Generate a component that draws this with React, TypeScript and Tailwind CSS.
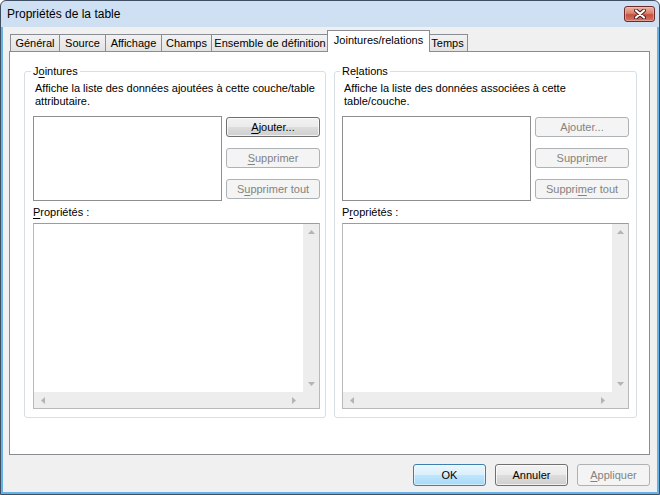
import React from "react";

// Boîte de dialogue « Propriétés de la table », onglet Jointures/relations (style Windows 7).

const TABS = [
  { label: "Général", w: "w-[50px]" },
  { label: "Source", w: "w-[47px]" },
  { label: "Affichage", w: "w-[57px]" },
  { label: "Champs", w: "w-[51px]" },
  { label: "Ensemble de définition", w: "w-[118px]" },
  { label: "Jointures/relations", w: "w-[103px]", active: true },
  { label: "Temps", w: "w-[41px]" },
];

// libellé avec lettre soulignée (raccourci clavier)
function Mn({ text, at }: { text: string; at: number }) {
  return (
    <>
      {text.slice(0, at)}
      <span className="underline underline-offset-[2px]">{text[at]}</span>
      {text.slice(at + 1)}
    </>
  );
}

function Btn({
  children,
  disabled,
  primary,
  className = "",
}: {
  children: React.ReactNode;
  disabled?: boolean;
  primary?: boolean;
  className?: string;
}) {
  const look = disabled
    ? "border-[#adb2b5] bg-[#f4f4f4] text-[#838383]"
    : primary
      ? "border-[#3c7fb1] bg-[linear-gradient(#eaf6fd_0%,#d9f0fc_50%,#bee6fd_51%,#a7d9f5_100%)] text-black shadow-[inset_0_0_0_1px_#ffffff80]"
      : "border-[#707070] bg-[linear-gradient(#f2f2f2_0%,#ebebeb_50%,#dddddd_51%,#cfcfcf_100%)] text-black shadow-[inset_0_0_0_1px_#ffffffb0]";
  return (
    <button
      type="button"
      className={`flex items-center justify-center rounded-[3px] border leading-none ${look} ${className}`}
    >
      {children}
    </button>
  );
}

function Arrow({ dir }: { dir: "up" | "down" | "left" | "right" }) {
  const pts = {
    up: "0,4 3.5,0 7,4",
    down: "0,0 3.5,4 7,0",
    left: "4,0 0,3.5 4,7",
    right: "0,0 4,3.5 0,7",
  }[dir];
  const vert = dir === "up" || dir === "down";
  return (
    <svg width={vert ? 7 : 4} height={vert ? 4 : 7} viewBox={vert ? "0 0 7 4" : "0 0 4 7"}>
      <polygon points={pts} fill="#b4b4b4" />
    </svg>
  );
}

function PropsBox() {
  return (
    <div className="flex h-[186px] w-[287px] flex-col border border-[#b9b9b9] border-t-[#9c9c9c] bg-white">
      <div className="flex flex-1">
        <div className="flex-1" />
        <div className="flex w-[16px] flex-col items-center justify-between bg-[#ededed] py-[6px]">
          <Arrow dir="up" />
          <Arrow dir="down" />
        </div>
      </div>
      <div className="flex h-[16px]">
        <div className="flex flex-1 items-center justify-between bg-[#ededed] px-[7px]">
          <Arrow dir="left" />
          <Arrow dir="right" />
        </div>
        <div className="w-[16px] bg-[#ededed]" />
      </div>
    </div>
  );
}

function Group({
  title,
  desc,
  right,
}: {
  title: React.ReactNode;
  desc: React.ReactNode;
  right?: boolean;
}) {
  return (
    <fieldset
      className={`h-[353px] min-w-0 rounded-[3px] border border-[#d5dfe5] pb-[9px] ${
        right ? "w-[303px] pl-[7px] pr-[7px]" : "w-[302px] pl-[8px] pr-[5px]"
      }`}
    >
      <legend className="-ml-[2px] px-[2px] leading-[13px]">{title}</legend>
      <p className="ml-[2px] mt-[4px] leading-[13px]">{desc}</p>
      <div className="mt-[8px] flex gap-[4px]">
        <div className="h-[85px] w-[189px] border border-[#8e8f8f] bg-white" />
        <div className="flex flex-col gap-[11px] pt-[1px]">
          <Btn disabled={right} className="h-[20px] w-[94px]">
            {right ? <Mn text="Ajouter..." at={1} /> : <Mn text="Ajouter..." at={0} />}
          </Btn>
          <Btn disabled className="h-[20px] w-[94px]">
            {right ? <Mn text="Supprimer" at={5} /> : <Mn text="Supprimer" at={0} />}
          </Btn>
          <Btn disabled className="h-[20px] w-[94px]">
            {right ? <Mn text="Supprimer tout" at={6} /> : <Mn text="Supprimer tout" at={1} />}
          </Btn>
        </div>
      </div>
      <p className="mt-[5px] leading-[13px]">
        {right ? <Mn text="Propriétés :" at={1} /> : <Mn text="Propriétés :" at={0} />}
      </p>
      <div className="mt-[4px]">
        <PropsBox />
      </div>
    </fieldset>
  );
}

export default function App() {
  return (
    <div className="flex h-[495px] w-[660px] flex-col overflow-hidden rounded-t-[6px] border border-[#3f4f63] bg-[linear-gradient(#cfe0f3,#bfd4ec)] font-['Liberation_Sans',Arial,sans-serif] text-[11px] text-black">
      {/* barre de titre */}
      <div className="flex h-[26px] items-center justify-between pl-[6px] pr-[4px]">
        <span className="text-[12px]">Propriétés de la table</span>
        <div className="flex h-[16px] w-[31px] items-center justify-center rounded-[3px] border border-[#6b2b2b] bg-[linear-gradient(#eab4a6_0%,#d9826f_45%,#c7503c_55%,#d2766a_100%)] shadow-[inset_0_0_0_1px_#f4c9bf80]">
          <svg width="12" height="10" viewBox="0 0 12 10">
            <path d="M2 1.5 L10 8.5 M10 1.5 L2 8.5" stroke="#4a1c1c" strokeWidth="4" strokeLinecap="round" />
            <path d="M2 1.5 L10 8.5 M10 1.5 L2 8.5" stroke="#ffffff" strokeWidth="2.2" strokeLinecap="round" />
          </svg>
        </div>
      </div>

      <div className="flex flex-1 flex-col border-x-2 border-b-2 border-[#66b1e6] bg-[#f0f0f0] pl-[6px] pr-[6px] pt-[4px]">
        {/* onglets */}
        <div className="flex h-[20px] items-end pl-[1px]">
          {TABS.map((t) =>
            t.active ? (
              <div
                key={t.label}
                className={`relative z-10 -mx-[2px] -mb-px flex h-[22px] ${t.w} items-center justify-center border border-b-0 border-[#898c95] bg-white pb-[2px]`}
              >
                {t.label}
              </div>
            ) : (
              <div
                key={t.label}
                className={`-ml-px flex h-[17px] ${t.w} items-center justify-center border border-b-0 border-[#898c95] bg-[linear-gradient(#f2f2f2,#e3e3e3)] first:ml-0`}
              >
                {t.label}
              </div>
            ),
          )}
        </div>

        {/* panneau */}
        <div className="flex h-[404px] w-[641px] gap-[8px] border border-[#898c95] bg-white pl-[14px] pt-[13px]">
          <Group
            title={<Mn text="Jointures" at={1} />}
            desc={
              <>
                Affiche la liste des données ajoutées à cette couche/table
                <br />
                attributaire.
              </>
            }
          />
          <Group
            right
            title={<Mn text="Relations" at={2} />}
            desc={
              <>
                Affiche la liste des données associées à cette
                <br />
                table/couche.
              </>
            }
          />
        </div>

        {/* boutons */}
        <div className="mt-[9px] flex w-[641px] justify-end gap-[9px]">
          <Btn primary className="h-[22px] w-[73px]">
            OK
          </Btn>
          <Btn className="h-[22px] w-[73px]">Annuler</Btn>
          <Btn disabled className="h-[22px] w-[73px]">
            <Mn text="Appliquer" at={0} />
          </Btn>
        </div>
      </div>
    </div>
  );
}
